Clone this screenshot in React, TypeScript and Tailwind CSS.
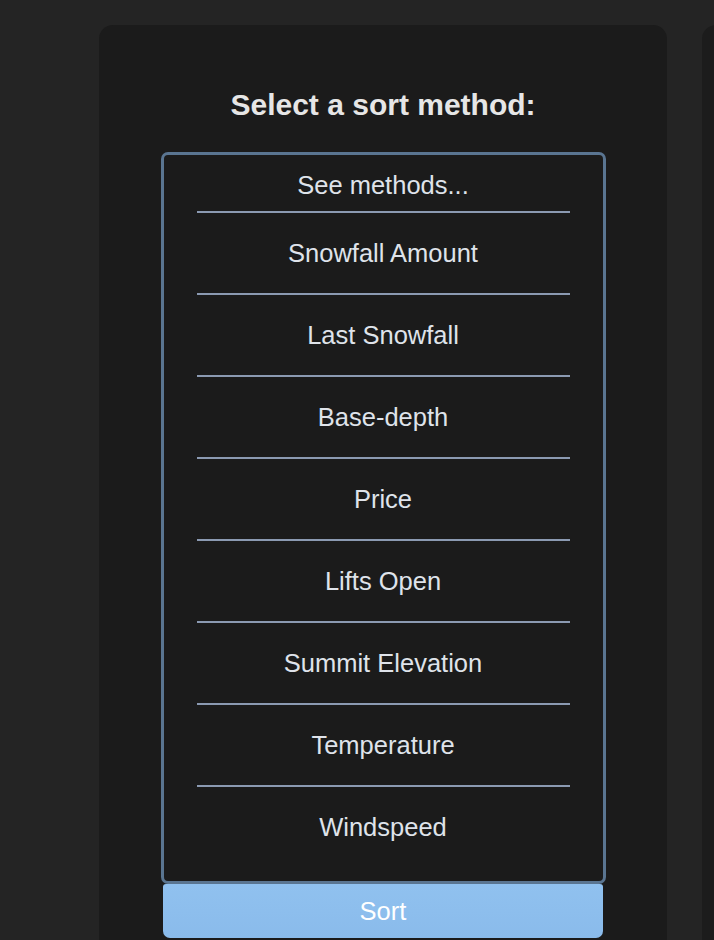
import React from "react";

const methods = [
  "Snowfall Amount",
  "Last Snowfall",
  "Base-depth",
  "Price",
  "Lifts Open",
  "Summit Elevation",
  "Temperature",
  "Windspeed",
];

function SortCard() {
  return (
    <div className="w-[568px] shrink-0 rounded-[14px] bg-[#1b1b1b] pt-[62px] pb-[60px] flex flex-col items-center">
      <h2 className="text-[30px] leading-[36px] font-bold text-[#e6e6e6]">Select a sort method:</h2>

      {/* listbox */}
      <div className="mt-[29px] w-[445px] shrink-0 rounded-[7px] border-[3px] border-[#5a7591] bg-[#1b1b1b] pb-[14px]">
        <div className="pt-[16px] pb-[12px] text-center text-[25.5px] leading-[28px] text-[#dfe3ea]">See methods...</div>
        {methods.map((m) => (
          <div key={m} className="mx-[33px] border-t-2 border-[#8b9ab2] h-[82px] flex items-center justify-center text-[25.5px] leading-[28px] text-[#dfe3ea]">
            {m}
          </div>
        ))}
      </div>

      <button className="w-[440px] h-[54px] shrink-0 rounded-t-[3px] rounded-b-[7px] bg-gradient-to-b from-[#90c1ef] to-[#8abbeb] text-white text-[25.5px] leading-[28px]">
        Sort
      </button>
    </div>
  );
}

export default function App() {
  return (
    <div
      className="h-screen overflow-hidden bg-[#242424] flex items-start gap-[35px] pl-[99px] pt-[25px]"
      style={{ fontFamily: '"Liberation Sans", Arial, sans-serif' }}
    >
      <SortCard />
      <div className="w-[568px] shrink-0 h-[1000px] rounded-[14px] bg-[#1c1c1c]" />
    </div>
  );
}
